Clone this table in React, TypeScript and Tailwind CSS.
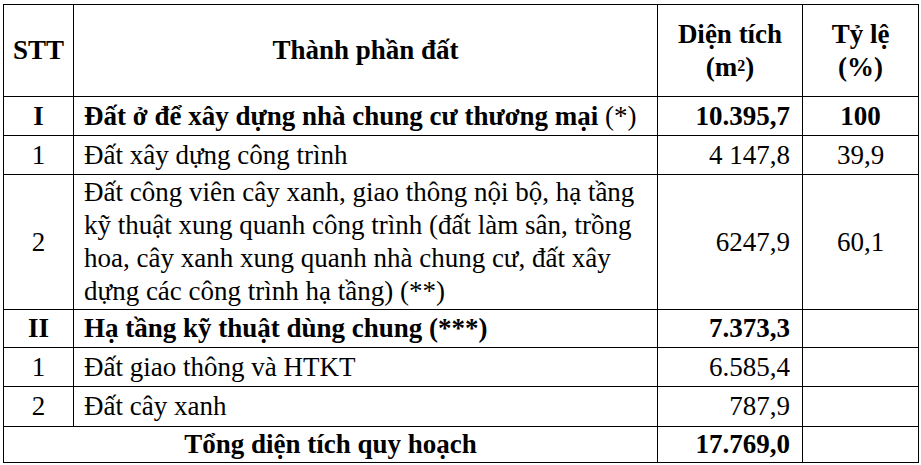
const rows = [
  { stt: 'I', lines: ['Đất ở để xây dựng nhà chung cư thương mại'], note: ' (*)', area: '10.395,7', ratio: '100', bold: true, h: 'h-[39px]' },
  { stt: '1', lines: ['Đất xây dựng công trình'], area: '4 147,8', ratio: '39,9', h: 'h-[39px]' },
  {
    stt: '2',
    lines: [
      'Đất công viên cây xanh, giao thông nội bộ, hạ tầng',
      'kỹ thuật xung quanh công trình (đất làm sân, trồng',
      'hoa, cây xanh xung quanh nhà chung cư, đất xây',
      'dựng các công trình hạ tầng) (**)',
    ],
    area: '6247,9',
    ratio: '60,1',
    h: 'h-[135px]',
  },
  { stt: 'II', lines: ['Hạ tầng kỹ thuật dùng chung (***)'], area: '7.373,3', ratio: '', bold: true, h: 'h-[38px]' },
  { stt: '1', lines: ['Đất giao thông và HTKT'], area: '6.585,4', ratio: '', h: 'h-[39px]' },
  { stt: '2', lines: ['Đất cây xanh'], area: '787,9', ratio: '', h: 'h-[40px]' },
]

const cell = 'border-[1.5px] border-black align-middle p-0'

export default function App() {
  return (
    <div className="w-[921px] h-[465px] bg-white pl-[3px] pt-[4px] text-black font-['Liberation_Serif','Times_New_Roman',serif] text-[27px] leading-[33px]">
      <table className="border-collapse w-[915px] table-fixed">
        <colgroup>
          <col className="w-[70px]" />
          <col className="w-[584px]" />
          <col className="w-[145px]" />
          <col className="w-[116px]" />
        </colgroup>
        <thead>
          <tr className="h-[92px] font-bold">
            <th className={`${cell} text-center`}>STT</th>
            <th className={`${cell} text-center`}>Thành phần đất</th>
            <th className={`${cell} text-center`}>
              Diện tích
              <br />
              (m<sup className="text-[16px] relative -top-[5px]">2</sup>)
            </th>
            <th className={`${cell} text-center`}>
              Tỷ lệ
              <br />
              (%)
            </th>
          </tr>
        </thead>
        <tbody>
          {rows.map((r, i) => (
            <tr key={i} className={r.h}>
              <td className={`${cell} text-center ${r.bold ? 'font-bold' : ''}`}>{r.stt}</td>
              <td className={`${cell} pl-[10px] whitespace-nowrap ${r.bold ? 'font-bold' : ''}`}>
                {r.lines.map((l, j) => (
                  <div key={j}>
                    {l}
                    {r.note && j === r.lines.length - 1 && <span className="font-normal">{r.note}</span>}
                  </div>
                ))}
              </td>
              <td className={`${cell} text-right pr-[12px] ${r.bold ? 'font-bold' : ''}`}>{r.area}</td>
              <td className={`${cell} text-center ${r.bold ? 'font-bold' : ''}`}>{r.ratio}</td>
            </tr>
          ))}
          <tr className="h-[36px] font-bold">
            <td colSpan={2} className={`${cell} text-center`}>Tổng diện tích quy hoạch</td>
            <td className={`${cell} text-right pr-[12px]`}>17.769,0</td>
            <td className={cell}></td>
          </tr>
        </tbody>
      </table>
    </div>
  )
}
